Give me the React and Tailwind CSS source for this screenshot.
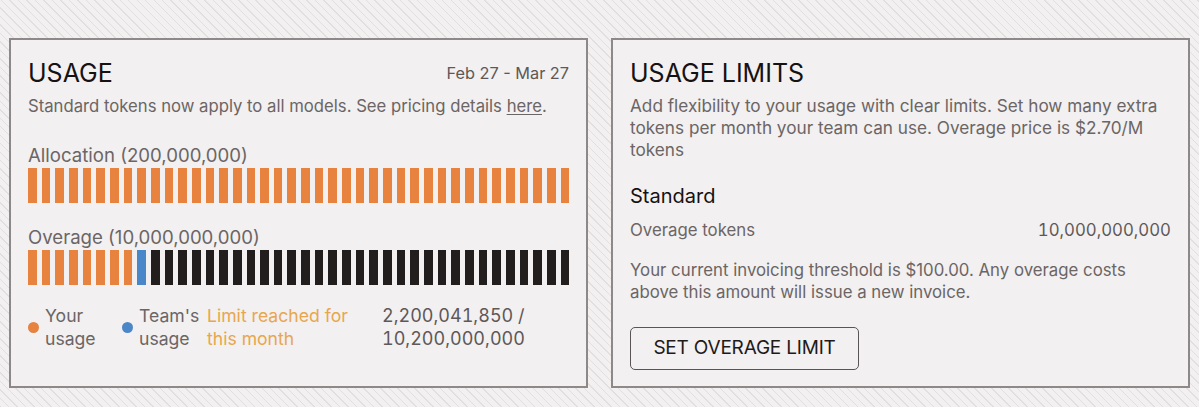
import React from "react";

const font = { fontFamily: "Inter, 'Noto Sans', sans-serif" };

function Bars({ orange, blue, total }) {
  const items = [];
  for (let i = 0; i < total; i++) {
    let c = "bg-[#221e1e]";
    if (i < orange) c = "bg-[#e7823f]";
    else if (i < orange + blue) c = "bg-[#4a87c9]";
    items.push(<div key={i} className={`flex-1 h-[35px] ${c}`} />);
  }
  return <div className="flex gap-[5px]">{items}</div>;
}

export default function App() {
  return (
    <div
      style={font}
      className="w-full h-[407px] flex gap-[23px] px-[9px] pt-[38px] bg-[#f1efef] bg-[repeating-linear-gradient(45deg,#e2dfdf_0px,#e2dfdf_1px,#f2f0f0_1px,#f2f0f0_6px)]"
    >
      {/* USAGE card */}
      <div className="w-[579px] h-[350px] border-2 border-[#8e8888] bg-[#f2f0f0] px-[17px] pt-[18px] flex flex-col">
        <div className="flex items-center justify-between h-[30px]">
          <div className="text-[25px] leading-[30px] text-[#161212]">USAGE</div>
          <div className="text-[16.3px] leading-[22px] text-[#5e5858]">Feb 27 - Mar 27</div>
        </div>
        <div className="mt-[7px] text-[16.7px] leading-[22px] text-[#6b6565]">
          Standard tokens now apply to all models. See pricing details{" "}
          <span className="underline underline-offset-2">here</span>.
        </div>
        <div className="mt-[26px] text-[18.6px] leading-[24px] text-[#6b6565]">Allocation (200,000,000)</div>
        <div className="mt-px">
          <Bars orange={40} blue={0} total={40} />
        </div>
        <div className="mt-[22px] text-[18.6px] leading-[24px] text-[#6b6565]">Overage (10,000,000,000)</div>
        <div className="mt-[1px]">
          <Bars orange={8} blue={1} total={40} />
        </div>
        <div className="mt-[19px] flex items-center text-[17.6px] leading-[23px]">
          <div className="flex items-center gap-[6px] w-[94px]">
            <span className="w-[11px] h-[11px] rounded-full bg-[#e7823f] shrink-0" />
            <span className="text-[#6b6565]">
              Your
              <br />
              usage
            </span>
          </div>
          <div className="flex items-center gap-[6px] w-[85px]">
            <span className="w-[11px] h-[11px] rounded-full bg-[#4a87c9] shrink-0" />
            <span className="text-[#6b6565]">
              Team's
              <br />
              usage
            </span>
          </div>
          <div className="w-[175px] text-[#e8a64e]">
            Limit reached for
            <br />
            this month
          </div>
          <div className="text-[#5e5858] text-[18px] tabular-nums">
            2,200,041,850 /
            <br />
            10,200,000,000
          </div>
        </div>
      </div>

      {/* USAGE LIMITS card */}
      <div className="w-[579px] h-[350px] border-2 border-[#8e8888] bg-[#f2f0f0] px-[17px] pt-[18px] flex flex-col">
        <div className="h-[30px] text-[25px] leading-[30px] text-[#161212]">USAGE LIMITS</div>
        <div className="mt-[7px] text-[17.2px] leading-[22px] text-[#6b6565]">
          Add flexibility to your usage with clear limits. Set how many extra
          <br />
          tokens per month your team can use. Overage price is $2.70/M
          <br />
          tokens
        </div>
        <div className="mt-[23px] text-[20px] leading-[24px] text-[#161212]">Standard</div>
        <div className="mt-[11px] flex justify-between text-[16.8px] leading-[22px]">
          <span className="text-[#6b6565]">Overage tokens</span>
          <span className="text-[#5e5858] tabular-nums">10,000,000,000</span>
        </div>
        <div className="mt-[18px] text-[16.8px] leading-[22px] text-[#6b6565] pr-[20px]">
          Your current invoicing threshold is $100.00. Any overage costs above this amount will issue a new invoice.
        </div>
        <div className="mt-[24px]">
          <button className="w-[229px] h-[43px] border-[1.5px] border-[#5a5454] rounded-[5px] text-[19px] text-[#1e1a1a] tracking-[-0.2px]">
            SET OVERAGE LIMIT
          </button>
        </div>
      </div>
    </div>
  );
}
